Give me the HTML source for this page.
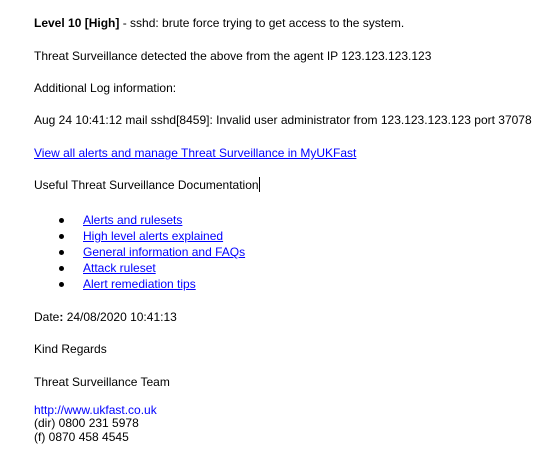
<!DOCTYPE html>
<html><head><style>
body{margin:0;width:554px;height:469px;background:#fff;font-family:"Liberation Sans",Arial,sans-serif;font-size:12px;color:#000;position:relative;overflow:hidden}
.l{position:absolute;left:34px;line-height:16px;white-space:nowrap}
a{color:#0000ff;text-decoration:underline}
.b{position:absolute;left:83px;line-height:16px;white-space:nowrap}
.d{position:absolute;left:59px;width:5px;height:5px;border-radius:50%;background:#000}
.cur{display:inline-block;width:1px;height:15px;background:#000;vertical-align:-3px}
</style></head><body>
<div class="l" style="top:15px"><b>Level 10 [High]</b> - sshd: brute force trying to get access to the system.</div>
<div class="l" style="top:48px">Threat Surveillance detected the above from the agent IP 123.123.123.123</div>
<div class="l" style="top:80px">Additional Log information:</div>
<div class="l" style="top:112px">Aug 24 10:41:12 mail sshd[8459]: Invalid user administrator from 123.123.123.123 port 37078</div>
<div class="l" style="top:145px"><a>View all alerts and manage Threat Surveillance in MyUKFast</a></div>
<div class="l" style="top:177px">Useful Threat Surveillance Documentation<span class="cur"></span></div>
<div class="d" style="top:218px"></div><div class="b" style="top:212px"><a>Alerts and rulesets</a></div>
<div class="d" style="top:234px"></div><div class="b" style="top:228px"><a>High level alerts explained</a></div>
<div class="d" style="top:250px"></div><div class="b" style="top:244px"><a>General information and FAQs</a></div>
<div class="d" style="top:266px"></div><div class="b" style="top:260px"><a>Attack ruleset</a></div>
<div class="d" style="top:282px"></div><div class="b" style="top:276px"><a>Alert remediation tips</a></div>
<div class="l" style="top:309px">Date<b>:</b> 24/08/2020 10:41:13</div>
<div class="l" style="top:341px">Kind Regards</div>
<div class="l" style="top:374px">Threat Surveillance Team</div>
<div class="l" style="top:402px;color:#0000ff">http://www.ukfast.co.uk</div>
<div class="l" style="top:415px">(dir) 0800 231 5978</div>
<div class="l" style="top:429px">(f) 0870 458 4545</div>
</body></html>
